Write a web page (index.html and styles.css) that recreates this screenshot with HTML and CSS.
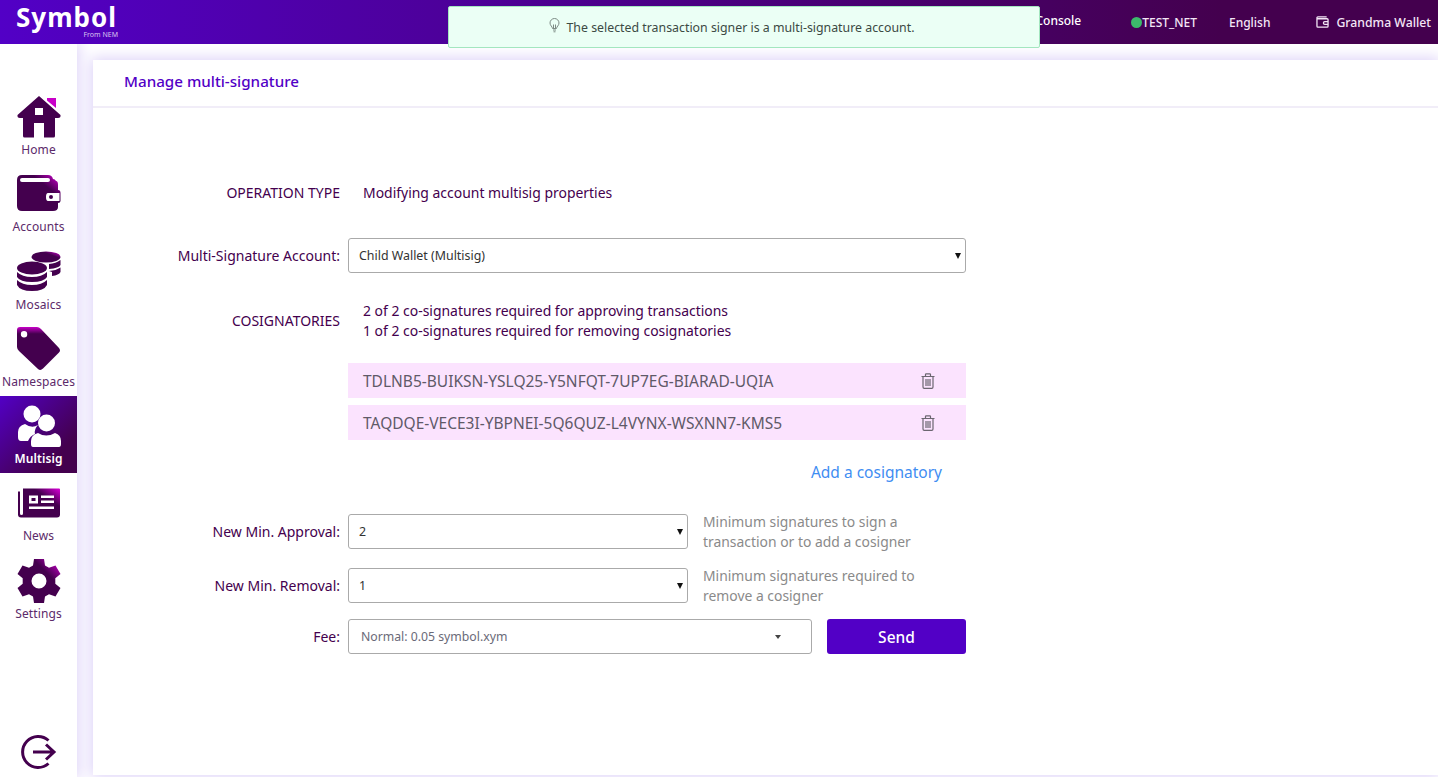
FILE: index.html
```html
<!DOCTYPE html>
<html lang="en">
<head>
  <meta charset="UTF-8">
  <title>Symbol Wallet</title>
  <link rel="stylesheet" href="styles.css">
</head>
<body>

  <!-- gradients shared by the sidebar icons -->
  <svg class="defs" width="0" height="0">
    <defs>
      <linearGradient id="iconfill" x1="0" y1="1" x2="1" y2="0">
        <stop offset="0" stop-color="#44004e"/>
        <stop offset="0.68" stop-color="#44004e"/>
        <stop offset="0.96" stop-color="#c800c8"/>
      </linearGradient>
      <linearGradient id="tagfill" x1="0.6" y1="0" x2="0.6" y2="1">
        <stop offset="0" stop-color="#c800c8"/>
        <stop offset="0.16" stop-color="#44004e"/>
        <stop offset="1" stop-color="#44004e"/>
      </linearGradient>
    </defs>
  </svg>

  <header class="topbar">
    <div class="logo">
      <span class="logo-name">Symbol</span>
      <span class="logo-sub">From NEM</span>
    </div>
    <nav class="topnav">
      <span class="nav-console">Console</span>
      <span class="nav-net"><i class="net-dot"></i>TEST_NET</span>
      <span class="nav-lang">English</span>
      <span class="nav-wallet">
        <svg width="13" height="12" viewBox="0 0 14 13" fill="none" stroke="#f3e6f6" stroke-width="1.4">
          <path d="M1 2.500V11a1 1 0 0 0 1 1h10a1 1 0 0 0 1-1V4a1 1 0 0 0-1-1H2.200A1.200 1.200 0 0 1 1 2a1 1 0 0 1 1-1h9.500"/>
          <path d="M13 6H9.500a1.500 1.500 0 0 0 0 3H13"/>
        </svg>
        Grandma Wallet
      </span>
    </nav>
  </header>

  <div class="toast">
    <svg width="11" height="15" viewBox="0 0 11 15" fill="none" stroke="#7d8a84" stroke-width="1">
      <path d="M3.500 10.500C3.300 8.500 1 7.500 1 5a4.500 4.500 0 0 1 9 0c0 2.500-2.300 3.500-2.500 5.500z"/>
      <path d="M4.500 10V6.500M6.500 10V6.500M4 12h3M4.500 13.800h2"/>
    </svg>
    The selected transaction signer is a multi-signature account.
  </div>

  <div class="layout">
    <aside class="sidebar">
      <a class="side-item">
        <svg width="44" height="42" viewBox="0 0 44 42">
          <path fill="#c800c8" d="M30 2H39V12L30 4.500Z"/>
          <path fill="#44004e" d="M22 0 L43.500 19 Q44 22 41 22 H38 V40 Q38 41.500 36.500 41.500 H27 V27 H17 V41.500 H7.500 Q6 41.500 6 40 V22 H3 Q0 22 .5 19 Z M18 12 V19 H26 V12 Z" fill-rule="evenodd"/>
        </svg>
        <span>Home</span>
      </a>
      <a class="side-item">
        <svg width="44" height="38" viewBox="0 0 44 38">
          <path fill="url(#iconfill)" fill-rule="evenodd" d="M5 0H31Q35 0 36 4Q38 4 39 6Q41 6 41 10V15Q43.500 15 43.500 18V26Q43.500 28 41 28V32Q41 36 36 36H5Q0 36 0 31V5Q0 0 5 0ZM5 3Q3 3 3 5Q3 7 5 7H31Q33 7 33 5Q33 3 31 3ZM31 18Q29 18 29 22Q29 26 31 26H42.500V18ZM34 20A2 2 0 1 1 34 24A2 2 0 1 1 34 20Z"/>
        </svg>
        <span>Accounts</span>
      </a>
      <a class="side-item">
        <svg width="44" height="42" viewBox="0 0 44 42">
          <ellipse cx="29" cy="6" rx="14.500" ry="5.500" fill="url(#iconfill)"/>
          <path fill="#44004e" d="M32 13Q39 12.500 43.500 9V14Q42 17 32 18ZM32 20Q39 19.500 43.500 16.500V21Q42 24 35 25V21Z"/>
          <ellipse cx="15" cy="17" rx="15" ry="6.500" fill="#44004e"/>
          <path fill="#44004e" d="M0 21Q5 26 15 26T30 21V26Q27 31 15 31T0 26ZM0 29Q5 34 15 34T30 29V34Q27 40 15 40T0 34Z"/>
        </svg>
        <span>Mosaics</span>
      </a>
      <a class="side-item">
        <svg width="44" height="44" viewBox="0 0 44 44">
          <path fill="url(#tagfill)" fill-rule="evenodd" d="M3 0H20Q22 0 24 2L42 21Q44 23.500 42 25.500L26 41.500Q23.500 44 21 42L2 24Q0 22 0 20V3Q0 0 3 0ZM7 4A3.200 3.200 0 1 0 7.100 10.400A3.200 3.200 0 1 0 7 4Z"/>
        </svg>
        <span>Namespaces</span>
      </a>
      <a class="side-item active">
        <svg width="44" height="42" viewBox="0 0 44 42">
          <circle cx="15" cy="9" r="8.500" fill="#fff"/>
          <path fill="#fff" d="M1 32V27Q1 21 8 19Q15 24 21 20Q17 24 18 29Q13 31 11 36H4Q1 36 1 32Z"/>
          <circle cx="29.500" cy="18" r="8.500" fill="#fff"/>
          <path fill="#fff" d="M16 42Q14 42 14 39V36Q14 30 21 28Q29 33 38 28Q44 30 44 36V39Q44 42 42 42Z"/>
        </svg>
        <span>Multisig</span>
      </a>
      <a class="side-item">
        <svg width="42" height="29" viewBox="0 0 42 29">
          <path fill="url(#iconfill)" fill-rule="evenodd" d="M5 0H41Q42 0 42 1V26Q42 29 39 29H3Q0 29 0 26V3H2V25Q2 26.500 3.500 26.500Q5 26.500 5 25ZM11 7V15H20V7ZM13.500 9.500H17.500V12.500H13.500ZM23 7V9.500H36V7ZM23 12V14.500H36V12ZM11 18V20.500H36V18Z"/>
        </svg>
        <span>News</span>
      </a>
      <a class="side-item">
        <svg width="44" height="44" viewBox="0 0 44 44">
          <path fill="url(#iconfill)" fill-rule="evenodd" d="M17 0H27L28 6.500L32 8.800L38.500 6.500L43.500 15L38.300 19.300V24.700L43.500 29L38.500 37.500L32 35.200L28 37.500L27 44H17L16 37.500L12 35.200L5.500 37.500L.5 29L5.700 24.700V19.300L.5 15L5.500 6.500L12 8.800L16 6.500ZM22 14.500A7.500 7.500 0 1 0 22 29.500A7.500 7.500 0 1 0 22 14.500Z"/>
        </svg>
        <span>Settings</span>
      </a>
      <a class="side-logout">
        <svg width="36" height="36" viewBox="0 0 36 36" fill="none" stroke="#44004e" stroke-width="3">
          <path d="M27.500 6.500A15.500 15.500 0 1 0 27.500 29.500"/>
          <path d="M12 18H33M25 10.500L33 18L25 25.500"/>
        </svg>
      </a>
    </aside>

    <main class="content">
      <section class="card">
        <div class="card-title">Manage multi-signature</div>

        <form class="form">
          <div class="row row-op">
            <label class="row-label">OPERATION TYPE</label>
            <div class="row-text">Modifying account multisig properties</div>
          </div>

          <div class="row row-account">
            <label class="row-label">Multi-Signature Account:</label>
            <div class="select-wrap">
              <select class="field"><option>Child Wallet (Multisig)</option></select>
            </div>
          </div>

          <div class="row row-cosig">
            <label class="row-label">COSIGNATORIES</label>
            <div class="row-text">
              <div>2 of 2 co-signatures required for approving transactions</div>
              <div>1 of 2 co-signatures required for removing cosignatories</div>
            </div>
          </div>

          <div class="row cosig-list">
            <span></span>
            <div>
              <div class="cosig">
                <span>TDLNB5-BUIKSN-YSLQ25-Y5NFQT-7UP7EG-BIARAD-UQIA</span>
                <svg class="trash" width="14" height="16" viewBox="0 0 14 16" fill="none" stroke="#6b6670" stroke-width="1.200">
                  <path d="M.5 3.500H13.500M4.500 3.500V1.500Q4.500 .8 5.200 .8H8.800Q9.500 .8 9.500 1.500V3.500M2 3.500V14Q2 15.300 3.200 15.300H10.800Q12 15.300 12 14V3.500M5 6V13M7 6V13M9 6V13"/>
                </svg>
              </div>
              <div class="cosig">
                <span>TAQDQE-VECE3I-YBPNEI-5Q6QUZ-L4VYNX-WSXNN7-KMS5</span>
                <svg class="trash" width="14" height="16" viewBox="0 0 14 16" fill="none" stroke="#6b6670" stroke-width="1.200">
                  <path d="M.5 3.500H13.500M4.500 3.500V1.500Q4.500 .8 5.200 .8H8.800Q9.500 .8 9.500 1.500V3.500M2 3.500V14Q2 15.300 3.200 15.300H10.800Q12 15.300 12 14V3.500M5 6V13M7 6V13M9 6V13"/>
                </svg>
              </div>
              <div class="add-cosig"><a>Add a cosignatory</a></div>
            </div>
          </div>

          <div class="row row-min">
            <label class="row-label">New Min. Approval:</label>
            <div class="min-wrap">
              <div class="select-wrap select-min">
                <select class="field"><option>2</option></select>
              </div>
              <p class="hint">Minimum signatures to sign a transaction or to add a cosigner</p>
            </div>
          </div>

          <div class="row row-min">
            <label class="row-label">New Min. Removal:</label>
            <div class="min-wrap">
              <div class="select-wrap select-min">
                <select class="field"><option>1</option></select>
              </div>
              <p class="hint">Minimum signatures required to remove a cosigner</p>
            </div>
          </div>

          <div class="row row-fee">
            <label class="row-label">Fee:</label>
            <div class="fee-wrap">
              <div class="fee-select">Normal: 0.05 symbol.xym<i class="fee-caret"></i></div>
              <button class="send" type="button">Send</button>
            </div>
          </div>
        </form>
      </section>
    </main>
  </div>

</body>
</html>
```

FILE: styles.css
```css
* {
  box-sizing: border-box;
}

html, body {
  height: 100%;
}

body {
  margin: 0;
  font-family: "Noto Sans", "Open Sans", sans-serif;
  color: #44004e;
  background-color: #fff;
  overflow: hidden;
}

.defs {
  position: absolute;
}

/* top bar */
.topbar {
  position: relative;
  z-index: 2;
  height: 44px;
  display: flex;
  justify-content: space-between;
  background: linear-gradient(90deg, #5200c6 0%, #44004e 85%, #44004e 100%);
  color: #fff;
}

.logo {
  width: 102px;
  margin-left: 16px;
  display: flex;
  flex-direction: column;
}

.logo-name {
  font-size: 26px;
  font-weight: 700;
  line-height: 22px;
  margin-top: 6px;
  letter-spacing: 1px;
}

.logo-sub {
  align-self: flex-end;
  font-size: 7px;
  line-height: 8px;
  margin-top: 3px;
  color: #d9c2f0;
}

.topnav {
  display: flex;
  align-items: center;
  font-size: 12px;
  font-weight: 500;
  padding-right: 7px;
}

.nav-console {
  margin-top: -3px;
  margin-right: 50px;
}

.nav-net {
  display: flex;
  align-items: center;
  margin-right: 32px;
  color: #f3e6f6;
}

.net-dot {
  width: 11px;
  height: 11px;
  border-radius: 50%;
  background-color: #3cb96b;
}

.nav-lang {
  margin-right: 46px;
  color: #f3e6f6;
}

.nav-wallet {
  display: flex;
  align-items: center;
  gap: 7px;
  font-size: 12.250px;
  color: #f3e6f6;
}

/* toast over the bar */
.toast {
  position: absolute;
  z-index: 3;
  left: 448px;
  top: 6px;
  width: 592px;
  height: 42px;
  padding: 1px 24px 0 0;
  display: flex;
  align-items: center;
  justify-content: center;
  gap: 6px;
  background-color: #ebfff5;
  border: 1px solid #a3e6bf;
  border-radius: 2px;
  font-size: 12.350px;
  color: #3c4a44;
}

.toast svg {
  margin-top: -4px;
}

/* sidebar */
.layout {
  display: flex;
  height: 733px;
}

.sidebar {
  position: relative;
  z-index: 1;
  width: 77px;
  flex-shrink: 0;
  display: flex;
  flex-direction: column;
  padding-top: 43px;
  background-color: #fff;
  box-shadow: 0 0 14px 2px #ddd2f8;
}

.side-item {
  height: 77.250px;
  padding-top: 8px;
  display: flex;
  flex-direction: column;
  align-items: center;
  font-size: 12px;
  letter-spacing: .1px;
  color: #5c2a6a;
}

.side-item svg {
  height: 44px;
  flex-shrink: 0;
}

.side-item span {
  margin-top: 2px;
  line-height: 18px;
}

.side-item.active {
  background: linear-gradient(135deg, #5200c6 0%, #44004e 75%);
  color: #fff;
  font-weight: 600;
}

.side-logout {
  margin-top: auto;
  margin-bottom: 7px;
  display: flex;
  justify-content: center;
}

/* main card */
.content {
  flex: 1;
  padding: 16px 0 2px 16px;
  background-color: #fff;
  min-width: 0;
}

.card {
  height: 100%;
  background-color: #fff;
  box-shadow: 0 0 14px 2px #ddd2f8;
}

.card-title {
  height: 48px;
  padding: 11px 0 0 31px;
  font-size: 15.200px;
  font-weight: 500;
  color: #5200c6;
  border-bottom: 2px solid #f1edf8;
}

.form {
  padding: 0 0 0 60px;
  font-size: 14px;
}

.row {
  display: grid;
  grid-template-columns: 187px 618px;
  column-gap: 8px;
}

.row-label {
  text-align: right;
  font-size: 14px;
}

.row-text {
  padding-left: 15px;
  line-height: 20px;
  font-size: 13.950px;
}

.row-op {
  margin-top: 75px;
  line-height: 20px;
}

.row-account {
  margin-top: 35px;
  align-items: center;
}

.row-cosig {
  margin-top: 28px;
  align-items: center;
}

.row-cosig .row-label {
  margin-top: -1px;
}

/* select with the small solid arrow */
.select-wrap {
  position: relative;
}

.select-wrap::after {
  content: "";
  position: absolute;
  right: 5px;
  top: 15px;
  border-left: 3.500px solid transparent;
  border-right: 3.500px solid transparent;
  border-top: 6px solid #111;
  pointer-events: none;
}

.select-min {
  width: 340px;
  flex-shrink: 0;
}

.field {
  display: block;
  width: 100%;
  height: 35px;
  padding: 0 10px;
  appearance: none;
  font-family: inherit;
  font-size: 12.400px;
  color: #333;
  background-color: #fff;
  border: 1px solid #aaa;
  border-radius: 3px;
}

.cosig-list {
  margin-top: 22px;
}

.cosig {
  height: 35px;
  margin-bottom: 7px;
  padding: 0 31px 0 15px;
  display: flex;
  align-items: center;
  justify-content: space-between;
  background-color: #fbe3fe;
  font-size: 15.500px;
  color: #5f5a68;
}

.add-cosig {
  text-align: right;
  padding-right: 24px;
  margin-top: 22px;
  line-height: 20px;
  font-size: 15.500px;
  color: #3f8df2;
}

.row-min {
  align-items: center;
}

.row-min + .row-min {
  margin-top: 12px;
}

.cosig-list + .row-min {
  margin-top: 28px;
}

.min-wrap {
  display: flex;
  align-items: center;
  gap: 15px;
}

.hint {
  width: 250px;
  margin: 2px 0 0;
  font-size: 13.900px;
  line-height: 20px;
  color: #8a8a8a;
}

.row-fee {
  margin-top: 13px;
  align-items: center;
}

.fee-wrap {
  display: flex;
  justify-content: space-between;
}

.fee-select {
  width: 464px;
  height: 35px;
  padding: 0 12px;
  display: flex;
  align-items: center;
  justify-content: space-between;
  font-size: 12.250px;
  color: #6a6a78;
  border: 1px solid #aaa;
  border-radius: 3px;
}

.fee-caret {
  width: 0;
  height: 0;
  margin-right: 18px;
  border-left: 3.500px solid transparent;
  border-right: 3.500px solid transparent;
  border-top: 4px solid #444;
}

.send {
  width: 139px;
  height: 35px;
  font-family: inherit;
  font-size: 15.500px;
  font-weight: 500;
  color: #fff;
  background-color: #5200c6;
  border: none;
  border-radius: 3px;
}
```
